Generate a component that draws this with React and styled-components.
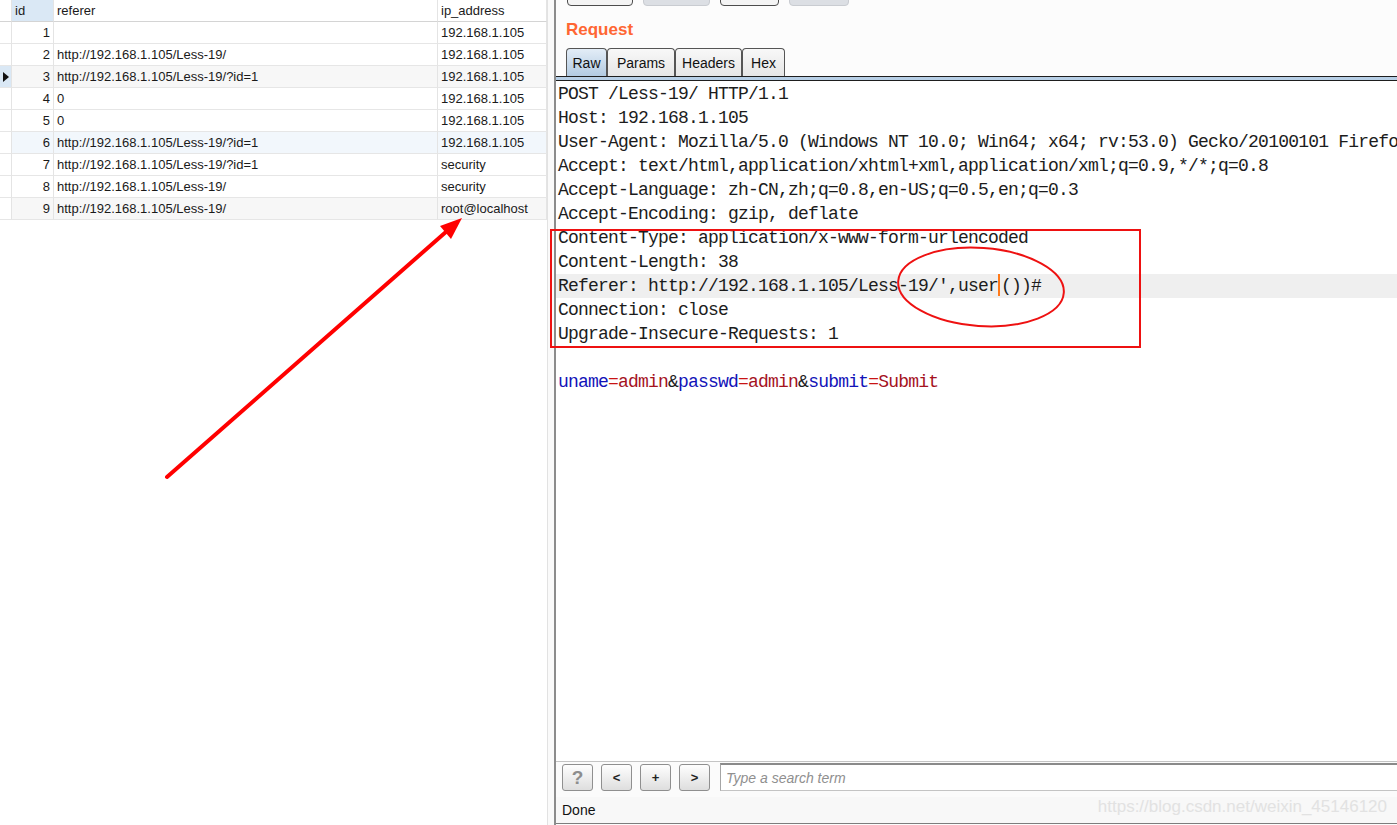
import React from "react";
import styled, { createGlobalStyle } from "styled-components";

const rows = [
  { id: 1, referer: "", ip: "192.168.1.105" },
  { id: 2, referer: "http://192.168.1.105/Less-19/", ip: "192.168.1.105" },
  { id: 3, referer: "http://192.168.1.105/Less-19/?id=1", ip: "192.168.1.105", current: true, tint: "#f7f7f7" },
  { id: 4, referer: "0", ip: "192.168.1.105" },
  { id: 5, referer: "0", ip: "192.168.1.105" },
  { id: 6, referer: "http://192.168.1.105/Less-19/?id=1", ip: "192.168.1.105", tint: "#f2f7fc" },
  { id: 7, referer: "http://192.168.1.105/Less-19/?id=1", ip: "security" },
  { id: 8, referer: "http://192.168.1.105/Less-19/", ip: "security" },
  { id: 9, referer: "http://192.168.1.105/Less-19/", ip: "root@localhost", tint: "#f7f7f7" },
];

const headerLines = [
  "POST /Less-19/ HTTP/1.1",
  "Host: 192.168.1.105",
  "User-Agent: Mozilla/5.0 (Windows NT 10.0; Win64; x64; rv:53.0) Gecko/20100101 Firefox/53.0",
  "Accept: text/html,application/xhtml+xml,application/xml;q=0.9,*/*;q=0.8",
  "Accept-Language: zh-CN,zh;q=0.8,en-US;q=0.5,en;q=0.3",
  "Accept-Encoding: gzip, deflate",
  "Content-Type: application/x-www-form-urlencoded",
  "Content-Length: 38",
];

const tailLines = ["Connection: close", "Upgrade-Insecure-Requests: 1", ""];

const params = [
  ["uname", "admin"],
  ["passwd", "admin"],
  ["submit", "Submit"],
];

const topButtons = [
  { width: 66, dim: false },
  { width: 67, dim: true },
  { width: 59, dim: false },
  { width: 60, dim: true },
];

const tabs = [
  { label: "Raw", width: 41, active: true },
  { label: "Params", width: 68 },
  { label: "Headers", width: 67 },
  { label: "Hex", width: 43 },
];

const GlobalStyle = createGlobalStyle`
  html, body {
    margin: 0;
    padding: 0;
    background: #fff;
    overflow: hidden;
  }
  * { box-sizing: border-box; }
`;

const Page = styled.div`
  position: relative;
  display: flex;
  width: 1397px;
  height: 825px;
  overflow: hidden;
  background: #fff;
  font-family: "Liberation Sans", Arial, sans-serif;
`;

/* ---------- left: navicat grid ---------- */

const TablePane = styled.div`
  flex: none;
  width: 548px;
  background: #fff;
  border-right: 1px solid #e2e2e2;
`;

const Grid = styled.div`
  display: grid;
  grid-template-columns: 12px 42px 384px 109px;
  grid-auto-rows: 22px;
  font-size: 13px;
  color: #1a1a1a;
`;

const Cell = styled.div`
  display: flex;
  align-items: center;
  padding: 0 3px;
  white-space: nowrap;
  overflow: hidden;
  background: ${(p) => p.$bg || "#fff"};
  border-right: 1px solid #e4e4e4;
  border-bottom: 1px solid ${(p) => (p.$head ? "#d4d4d4" : "#e6e6e6")};
  justify-content: ${(p) => (p.$right ? "flex-end" : "flex-start")};
`;

const Marker = styled(Cell)`
  padding: 0;
  justify-content: center;
  background: ${(p) => (p.$on ? "#dae8f5" : "#fff")};
`;

const Triangle = styled.span`
  width: 0;
  height: 0;
  border-top: 5px solid transparent;
  border-bottom: 5px solid transparent;
  border-left: 6px solid #111;
  margin-left: 1px;
`;

const Gutter = styled.div`
  flex: none;
  width: 6px;
  background: #fafafa;
`;

/* ---------- right: burp repeater ---------- */

const BurpPanel = styled.div`
  flex: 1;
  display: flex;
  flex-direction: column;
  min-width: 0;
  background: #fcfcfc;
  border-left: 2px solid #8c8c8c;
`;

const Toolbar = styled.div`
  display: flex;
  align-items: flex-end;
  gap: 10px;
  height: 6px;
  padding-left: 11px;
  overflow: hidden;
  flex: none;
`;

const TopButton = styled.div`
  flex: none;
  height: 24px;
  border-radius: 4px;
  border: 1px solid ${(p) => (p.$dim ? "#c9ccd1" : "#4d4d4d")};
  background: ${(p) => (p.$dim ? "#dcdfe4" : "#f4f4f4")};
  & + & { margin-left: ${(p) => (p.$first ? 0 : 1)}px; }
`;

const Title = styled.div`
  margin-top: 14px;
  padding-left: 10px;
  line-height: 20px;
  font-size: 17px;
  font-weight: bold;
  color: #ff6633;
  flex: none;
`;

const TabRow = styled.div`
  display: flex;
  margin-top: 8px;
  padding-left: 10px;
  height: 28px;
  flex: none;
`;

const Tab = styled.div`
  flex: none;
  display: flex;
  align-items: center;
  justify-content: center;
  font-size: 14px;
  color: #111;
  border: 1px solid #555;
  border-bottom: none;
  border-radius: 4px 4px 0 0;
  background: ${(p) =>
    p.$active
      ? "linear-gradient(#e3edf7, #b3cbe2)"
      : "linear-gradient(#f8f8f8, #e6e6e6)"};
`;

const TabRule = styled.div`
  flex: none;
  height: 5px;
  border-top: 1px solid #1e1e1e;
  border-bottom: 1px solid #1e1e1e;
  background: #b7cfe6;
`;

const Editor = styled.div`
  flex: 1;
  background: #fff;
  padding: 1px 0 0 2px;
  overflow: hidden;
  font-family: "Liberation Mono", "DejaVu Sans Mono", monospace;
  font-size: 18px;
  letter-spacing: -0.8px;
  color: #1c1c1c;
`;

const Line = styled.div`
  height: 24px;
  line-height: 24px;
  white-space: pre;
  margin-left: ${(p) => (p.$hl ? -2 : 0)}px;
  padding-left: ${(p) => (p.$hl ? 2 : 0)}px;
  background: ${(p) => (p.$hl ? "#efefef" : "transparent")};
`;

const Caret = styled.span`
  display: inline-block;
  width: 0;
  height: 22px;
  vertical-align: middle;
  border-left: 2px solid #ff7a1a;
  margin: -2px 1px 0 0;
`;

const Name = styled.span`
  color: #1212b8;
`;

const Value = styled.span`
  color: #a5121e;
`;

const Eq = styled.span`
  color: #c81414;
`;

const SearchBar = styled.div`
  flex: none;
  display: flex;
  align-items: flex-start;
  gap: 8px;
  height: 36px;
  padding: 1px 0 0 6px;
  background: #fbfbfb;
  border-top: 1px solid #c4c4c4;
`;

const NavButton = styled.div`
  flex: none;
  width: 31px;
  height: 27px;
  margin-top: 1px;
  display: flex;
  align-items: center;
  justify-content: center;
  border: 1px solid #8f8f8f;
  border-radius: 3px;
  background: linear-gradient(#fefefe, #dedede);
  font-size: ${(p) => (p.$big ? 19 : 13)}px;
  font-weight: bold;
  color: ${(p) => (p.$big ? "#8d8d8d" : "#222")};
`;

const SearchInput = styled.div`
  flex: 1;
  height: 28px;
  margin-left: 2px;
  display: flex;
  align-items: center;
  padding-left: 5px;
  background: #fff;
  border-top: 2px solid #8a8a8a;
  border-left: 1px solid #a5a5a5;
  border-bottom: 1px solid #c4c4c4;
  font-size: 14px;
  font-style: italic;
  color: #8f8f8f;
`;

const StatusBar = styled.div`
  flex: none;
  height: 27px;
  line-height: 26px;
  padding-left: 6px;
  font-size: 14px;
  color: #111;
  background: #f8f8f8;
  border-bottom: 1px solid #7d7d7d;
  margin-bottom: 1px;
`;

/* ---------- annotations on top ---------- */

const Overlay = styled.svg`
  position: absolute;
  left: 0;
  top: 0;
  pointer-events: none;
`;

const Watermark = styled.div`
  position: absolute;
  right: 10px;
  bottom: 8px;
  font-size: 17px;
  color: #e2e2e2;
`;

const DataGrid = () => (
  <Grid>
    <Marker $head />
    <Cell $head $bg="#dae8f5">id</Cell>
    <Cell $head>referer</Cell>
    <Cell $head>ip_address</Cell>
    {rows.map((r) => (
      <React.Fragment key={r.id}>
        <Marker $on={r.current}>{r.current && <Triangle />}</Marker>
        <Cell $right $bg={r.tint}>{r.id}</Cell>
        <Cell $bg={r.tint}>{r.referer}</Cell>
        <Cell $bg={r.tint}>{r.ip}</Cell>
      </React.Fragment>
    ))}
  </Grid>
);

const RequestEditor = () => (
  <Editor>
    {headerLines.map((l, i) => (
      <Line key={i}>{l}</Line>
    ))}
    <Line $hl>
      Referer: http://192.168.1.105/Less-19/',user<Caret />())#
    </Line>
    {tailLines.map((l, i) => (
      <Line key={"t" + i}>{l}</Line>
    ))}
    <Line>
      {params.map(([k, v], i) => (
        <React.Fragment key={k}>
          {i > 0 && "&"}
          <Name>{k}</Name>
          <Eq>=</Eq>
          <Value>{v}</Value>
        </React.Fragment>
      ))}
    </Line>
  </Editor>
);

export default function App() {
  return (
    <>
      <GlobalStyle />
      <Page>
        <TablePane>
          <DataGrid />
        </TablePane>
        <Gutter />
        <BurpPanel>
          <Toolbar>
            {topButtons.map((b, i) => (
              <TopButton key={i} $dim={b.dim} $first={i !== 1} style={{ width: b.width }} />
            ))}
          </Toolbar>
          <Title>Request</Title>
          <TabRow>
            {tabs.map((t) => (
              <Tab key={t.label} $active={t.active} style={{ width: t.width }}>
                {t.label}
              </Tab>
            ))}
          </TabRow>
          <TabRule />
          <RequestEditor />
          <SearchBar>
            <NavButton $big>?</NavButton>
            <NavButton>&lt;</NavButton>
            <NavButton>+</NavButton>
            <NavButton>&gt;</NavButton>
            <SearchInput>Type a search term</SearchInput>
          </SearchBar>
          <StatusBar>Done</StatusBar>
        </BurpPanel>

        <Overlay width="1397" height="825" viewBox="0 0 1397 825">
          <rect x="551" y="230" width="589" height="117" fill="none" stroke="#ee1111" strokeWidth="2" />
          <ellipse cx="981" cy="287" rx="83" ry="39" fill="none" stroke="#ee1111" strokeWidth="2" transform="rotate(4 981 287)" />
          <line x1="167" y1="477" x2="447" y2="231" stroke="#ff0000" strokeWidth="4" strokeLinecap="round" />
          <polygon points="462,218 451,239 440,226" fill="#ff0000" />
        </Overlay>
        <Watermark>https://blog.csdn.net/weixin_45146120</Watermark>
      </Page>
    </>
  );
}
